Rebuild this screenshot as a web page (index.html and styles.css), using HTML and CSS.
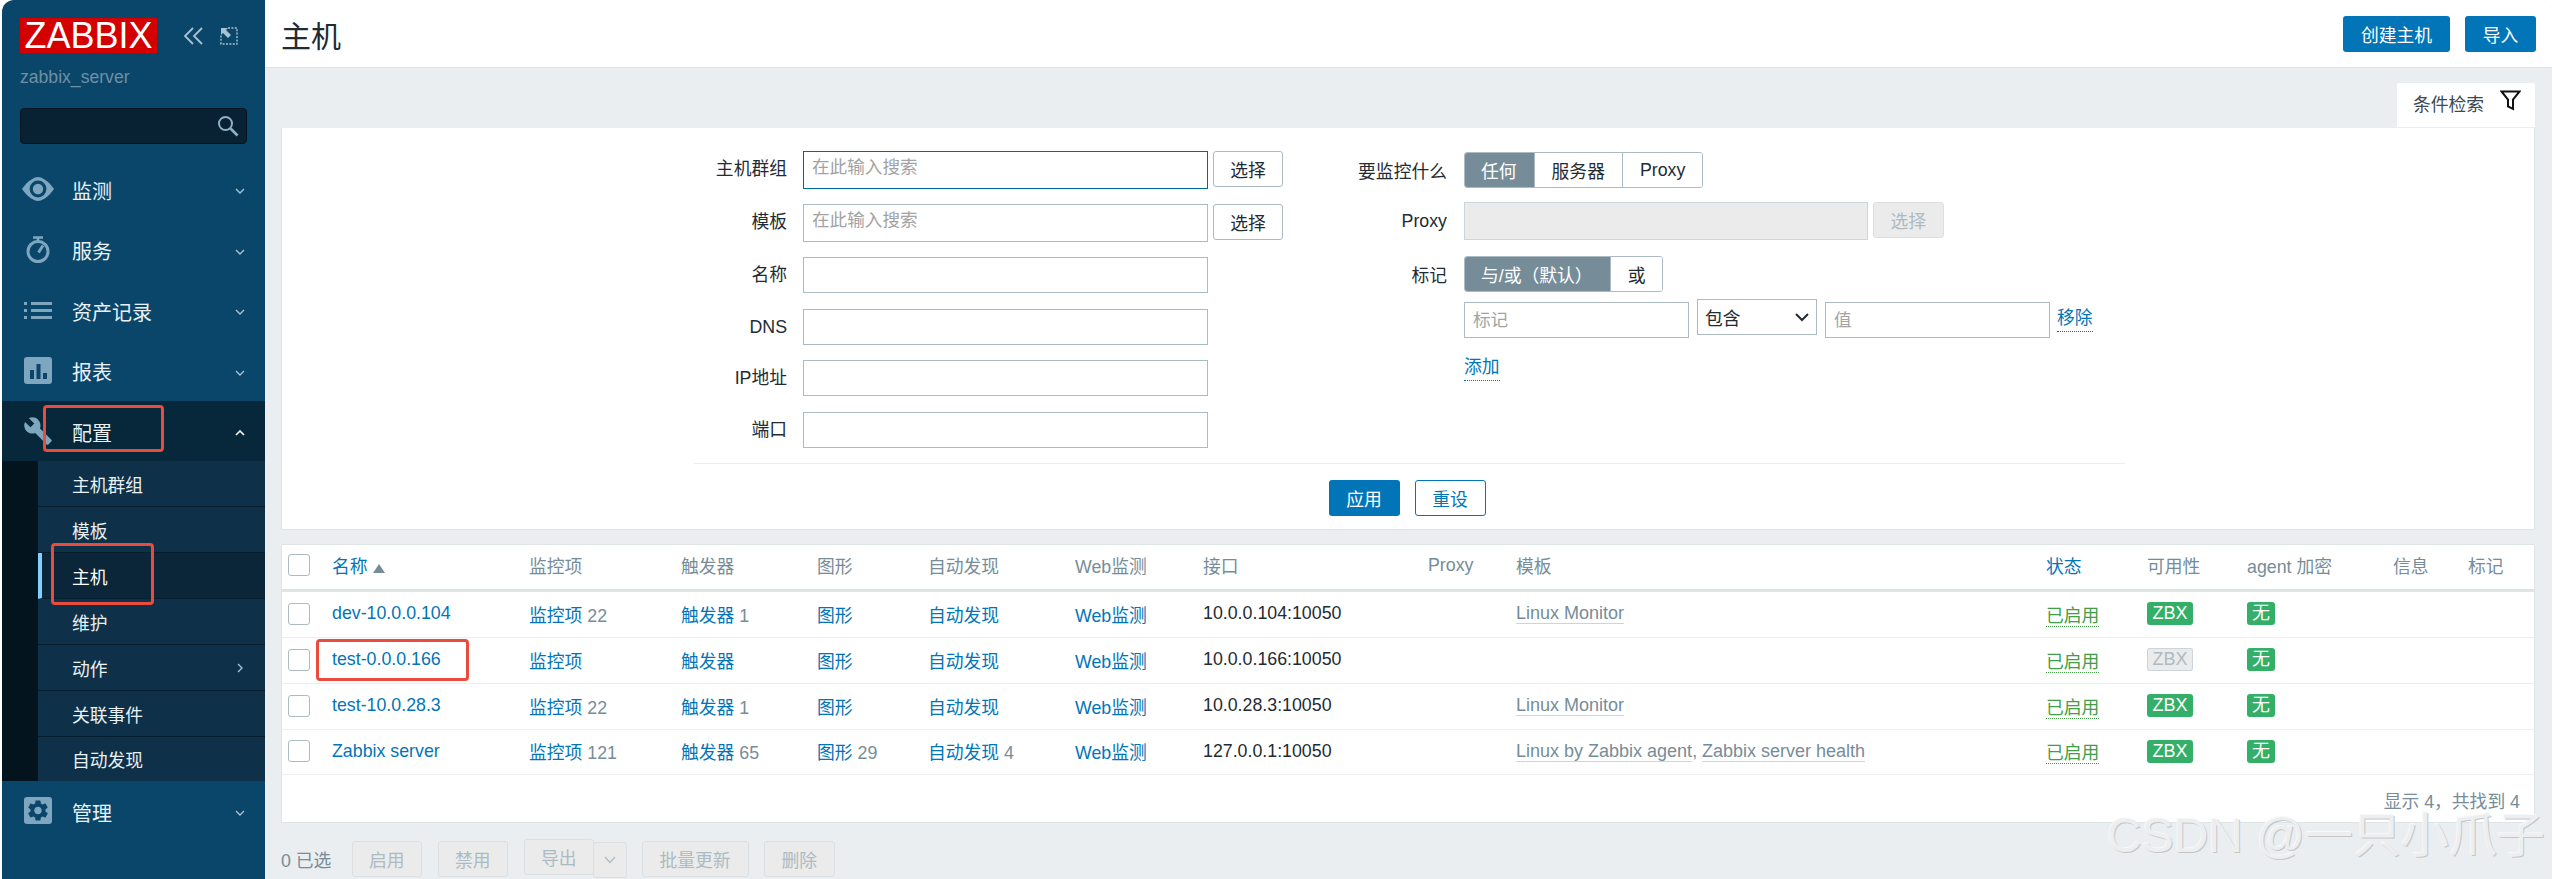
FILE: index.html
```html
<!DOCTYPE html>
<html>
<head>
<title>主机</title>
<meta charset="utf-8">
<link rel="stylesheet" href="styles.css">
</head>
<body>
  <div class="app">
    <aside class="sidebar">
      <div class="brand">
        <div class="logo">ZABBIX</div>
        <svg class="collapse" width="20" height="18" viewBox="0 0 20 18"><path d="M10 1 2 9l8 8M19 1l-8 8 8 8" fill="none" stroke="#a9c2d2" stroke-width="1.8"/></svg>
        <svg class="kiosk" width="18" height="18" viewBox="0 0 18 18"><path d="M8 1h9v16H1V8" fill="none" stroke="#a9c2d2" stroke-width="1.4" stroke-dasharray="2 1.4"/><path d="M1 1h7L6 3l5 5-3 3-5-5-2 2z" fill="#a9c2d2"/></svg>
      </div>
      <div class="server-name">zabbix_server</div>
      <div class="search-box">
        <svg width="22" height="22" viewBox="0 0 22 22"><circle cx="8.5" cy="8.5" r="6.5" fill="none" stroke="#8fb0c4" stroke-width="2"/><path d="m13.5 13.5 7 7" stroke="#8fb0c4" stroke-width="2.6"/></svg>
      </div>
      <nav class="menu">
        <a class="menu-item">
          <svg class="menu-icon" width="32" height="24" viewBox="0 0 32 24"><path d="M0 12C6 3 13 0 16 0s10 3 16 12c-6 9-13 12-16 12S6 21 0 12z" fill="#7ea6bf"/><circle cx="16" cy="12" r="8.4" fill="#0a466a"/><circle cx="16" cy="12" r="5.2" fill="#7ea6bf"/></svg>
          <span>监测</span>
          <svg class="chevron" width="10" height="6" viewBox="0 0 10 6"><path d="m1 1 4 4 4-4" fill="none" stroke="#a9c2d2" stroke-width="1.4"/></svg>
        </a>
        <a class="menu-item">
          <svg class="menu-icon" width="32" height="27" viewBox="0 0 32 27"><circle cx="16" cy="15.500" r="10" fill="none" stroke="#7ea6bf" stroke-width="3"/><path d="M11 1.500h10M16 2v3" stroke="#7ea6bf" stroke-width="2.600"/><path d="m21 9.500-4.500 7" stroke="#7ea6bf" stroke-width="3"/></svg>
          <span>服务</span>
          <svg class="chevron" width="10" height="6" viewBox="0 0 10 6"><path d="m1 1 4 4 4-4" fill="none" stroke="#a9c2d2" stroke-width="1.4"/></svg>
        </a>
        <a class="menu-item">
          <svg class="menu-icon" width="32" height="17" viewBox="0 0 32 17"><path d="M2 0h3v3H2zM2 7h3v3H2zM2 14h3v3H2zM9 0h21v3H9zM9 7h21v3H9zM9 14h21v3H9z" fill="#7ea6bf"/></svg>
          <span>资产记录</span>
          <svg class="chevron" width="10" height="6" viewBox="0 0 10 6"><path d="m1 1 4 4 4-4" fill="none" stroke="#a9c2d2" stroke-width="1.4"/></svg>
        </a>
        <a class="menu-item">
          <svg class="menu-icon" width="32" height="28" viewBox="0 0 32 28"><rect x="2" width="28" height="27" rx="3" fill="#7ea6bf"/><path d="M8 13h4v9H8zM14.500 7h4v15h-4zM21 16h4v6h-4z" fill="#0a466a"/></svg>
          <span>报表</span>
          <svg class="chevron" width="10" height="6" viewBox="0 0 10 6"><path d="m1 1 4 4 4-4" fill="none" stroke="#a9c2d2" stroke-width="1.4"/></svg>
        </a>
        <a class="menu-item menu-item-open">
          <svg class="menu-icon" width="32" height="30" viewBox="0 0 24 24"><path d="M22.700 19l-9.100-9.100c.9-2.300.4-5-1.500-6.900-2-2-5-2.400-7.400-1.300L9 6 6 9 1.600 4.700C.4 7.100.9 10.100 2.900 12.100c1.900 1.900 4.600 2.400 6.900 1.500l9.100 9.100c.4.400 1 .4 1.400 0l2.300-2.300c.5-.4.5-1.100.1-1.400z" fill="#7ea6bf"/></svg>
          <span>配置</span>
          <svg class="chevron" width="10" height="6" viewBox="0 0 10 6"><path d="m1 5 4-4 4 4" fill="none" stroke="#fff" stroke-width="1.6"/></svg>
        </a>
        <div class="submenu">
          <ul class="submenu-list">
            <li>主机群组</li>
            <li>模板</li>
            <li class="current">主机</li>
            <li>维护</li>
            <li class="has-arrow">动作
              <svg width="6" height="10" viewBox="0 0 6 10"><path d="m1 1 4 4-4 4" fill="none" stroke="#a9c2d2" stroke-width="1.4"/></svg>
            </li>
            <li>关联事件</li>
            <li>自动发现</li>
          </ul>
        </div>
        <a class="menu-item">
          <svg class="menu-icon" width="32" height="28" viewBox="0 0 32 28"><rect x="2" width="28" height="27" rx="3" fill="#7ea6bf"/><g transform="translate(3.500 1) scale(1.040)"><path d="M19.140 12.940c.04-.3.06-.61.06-.94 0-.32-.02-.64-.07-.94l2.030-1.580a.49.49 0 0 0 .12-.61l-1.920-3.320a.488.488 0 0 0-.59-.22l-2.390.96c-.5-.38-1.030-.7-1.620-.94l-.36-2.540a.484.484 0 0 0-.48-.41h-3.840c-.24 0-.43.17-.47.41l-.36 2.540c-.59.24-1.130.57-1.620.94l-2.390-.96c-.22-.08-.47 0-.59.22L2.740 8.870c-.12.21-.08.47.12.61l2.030 1.580c-.05.3-.09.63-.09.94s.02.64.07.94l-2.030 1.580a.49.49 0 0 0-.12.61l1.920 3.320c.12.22.37.29.59.22l2.390-.96c.5.38 1.030.7 1.620.94l.36 2.540c.05.24.24.41.48.41h3.840c.24 0 .44-.17.47-.41l.36-2.540c.59-.24 1.130-.56 1.620-.94l2.390.96c.22.08.47 0 .59-.22l1.920-3.320c.12-.22.07-.47-.12-.61l-2.010-1.580zM12 15.600c-1.980 0-3.600-1.620-3.600-3.600s1.620-3.600 3.600-3.600 3.600 1.620 3.600 3.600-1.620 3.600-3.600 3.600z" fill="#0a466a"/></g></svg>
          <span>管理</span>
          <svg class="chevron" width="10" height="6" viewBox="0 0 10 6"><path d="m1 1 4 4 4-4" fill="none" stroke="#a9c2d2" stroke-width="1.4"/></svg>
        </a>
      </nav>
    </aside>

    <main class="main">
      <header class="page-header">
        <h1>主机</h1>
        <div class="header-actions">
          <button class="btn-primary btn-create">创建主机</button>
          <button class="btn-primary btn-import">导入</button>
        </div>
      </header>

      <div class="content">
        <div class="filter-tabs">
          <div class="filter-tab">
            <span>条件检索</span>
            <svg width="21" height="21" viewBox="0 0 21 21"><path d="M1.500 1.500h18l-6.500 8v9.500l-5-2.500v-7z" fill="none" stroke="#111" stroke-width="2"/></svg>
          </div>
        </div>

        <section class="filter-panel">
          <div class="filter-form">
            <div class="filter-left">
              <label>主机群组</label>
              <input class="input input-focus" type="text" placeholder="在此输入搜索">
              <button class="btn-alt">选择</button>
              <label>模板</label>
              <input class="input input-tall" type="text" placeholder="在此输入搜索">
              <button class="btn-alt">选择</button>
              <label>名称</label>
              <input class="input" type="text">
              <span></span>
              <label>DNS</label>
              <input class="input" type="text">
              <span></span>
              <label>IP地址</label>
              <input class="input" type="text">
              <span></span>
              <label>端口</label>
              <input class="input" type="text">
              <span></span>
            </div>
            <div class="filter-right">
              <div class="right-row row-monitored">
                <label>要监控什么</label>
                <div class="segmented">
                  <span class="seg seg-on">任何</span>
                  <span class="seg">服务器</span>
                  <span class="seg">Proxy</span>
                </div>
              </div>
              <div class="right-row row-proxy">
                <label>Proxy</label>
                <input class="input input-disabled" type="text" disabled>
                <button class="btn-off btn-off-select">选择</button>
              </div>
              <div class="right-row row-tags">
                <label>标记</label>
                <div class="segmented">
                  <span class="seg seg-on seg-andor">与/或（默认）</span>
                  <span class="seg">或</span>
                </div>
              </div>
              <div class="tag-row">
                <input class="input tag-input" type="text" placeholder="标记">
                <div class="select">
                  <span>包含</span>
                  <svg width="14" height="9" viewBox="0 0 14 9"><path d="m1 1 6 6 6-6" fill="none" stroke="#1f2c33" stroke-width="2"/></svg>
                </div>
                <input class="input tag-input" type="text" placeholder="值">
                <a class="link-dotted">移除</a>
              </div>
              <div class="add-row"><a class="link-dotted">添加</a></div>
            </div>
          </div>
          <div class="filter-buttons">
            <button class="btn-primary">应用</button>
            <button class="btn-reset">重设</button>
          </div>
        </section>

        <section class="hosts">
          <table class="hosts-table">
            <colgroup>
              <col class="c-check"><col class="c-name"><col class="c-items"><col class="c-triggers">
              <col class="c-graphs"><col class="c-discovery"><col class="c-web"><col class="c-iface">
              <col class="c-proxy"><col class="c-templates"><col class="c-status"><col class="c-avail">
              <col class="c-enc"><col class="c-info"><col class="c-tags">
            </colgroup>
            <thead>
              <tr>
                <th class="check"><input type="checkbox"></th>
                <th><a class="sort">名称</a> <i class="sort-arrow"></i></th>
                <th>监控项</th>
                <th>触发器</th>
                <th>图形</th>
                <th>自动发现</th>
                <th>Web监测</th>
                <th>接口</th>
                <th>Proxy</th>
                <th>模板</th>
                <th><a class="sort">状态</a></th>
                <th>可用性</th>
                <th>agent 加密</th>
                <th>信息</th>
                <th>标记</th>
              </tr>
            </thead>
            <tbody>
              <tr>
                <td class="check"><input type="checkbox"></td>
                <td><a>dev-10.0.0.104</a></td>
                <td><a>监控项</a> <em>22</em></td>
                <td><a>触发器</a> <em>1</em></td>
                <td><a>图形</a></td>
                <td><a>自动发现</a></td>
                <td><a>Web监测</a></td>
                <td>10.0.0.104:10050</td>
                <td></td>
                <td><a class="tpl">Linux Monitor</a></td>
                <td><a class="on">已启用</a></td>
                <td><span class="badge">ZBX</span></td>
                <td><span class="badge badge-none">无</span></td>
                <td></td>
                <td></td>
              </tr>
              <tr>
                <td class="check"><input type="checkbox"></td>
                <td><a>test-0.0.0.166</a></td>
                <td><a>监控项</a></td>
                <td><a>触发器</a></td>
                <td><a>图形</a></td>
                <td><a>自动发现</a></td>
                <td><a>Web监测</a></td>
                <td>10.0.0.166:10050</td>
                <td></td>
                <td></td>
                <td><a class="on">已启用</a></td>
                <td><span class="badge badge-off">ZBX</span></td>
                <td><span class="badge badge-none">无</span></td>
                <td></td>
                <td></td>
              </tr>
              <tr>
                <td class="check"><input type="checkbox"></td>
                <td><a>test-10.0.28.3</a></td>
                <td><a>监控项</a> <em>22</em></td>
                <td><a>触发器</a> <em>1</em></td>
                <td><a>图形</a></td>
                <td><a>自动发现</a></td>
                <td><a>Web监测</a></td>
                <td>10.0.28.3:10050</td>
                <td></td>
                <td><a class="tpl">Linux Monitor</a></td>
                <td><a class="on">已启用</a></td>
                <td><span class="badge">ZBX</span></td>
                <td><span class="badge badge-none">无</span></td>
                <td></td>
                <td></td>
              </tr>
              <tr class="last">
                <td class="check"><input type="checkbox"></td>
                <td><a>Zabbix server</a></td>
                <td><a>监控项</a> <em>121</em></td>
                <td><a>触发器</a> <em>65</em></td>
                <td><a>图形</a> <em>29</em></td>
                <td><a>自动发现</a> <em>4</em></td>
                <td><a>Web监测</a></td>
                <td>127.0.0.1:10050</td>
                <td></td>
                <td><a class="tpl">Linux by Zabbix agent</a><em>,</em> <a class="tpl">Zabbix server health</a></td>
                <td><a class="on">已启用</a></td>
                <td><span class="badge">ZBX</span></td>
                <td><span class="badge badge-none">无</span></td>
                <td></td>
                <td></td>
              </tr>
            </tbody>
          </table>
          <div class="table-stats">显示 4，共找到 4</div>
        </section>

        <div class="action-bar">
          <span class="selected-count">0 已选</span>
          <button class="btn-off">启用</button>
          <button class="btn-off">禁用</button>
          <div class="export-group">
            <button class="btn-off">导出</button>
            <button class="btn-off btn-off-arrow">
              <svg width="12" height="8" viewBox="0 0 12 8"><path d="m1 1 5 5.500L11 1" fill="none" stroke="#acbbc2" stroke-width="1.200"/></svg>
            </button>
          </div>
          <button class="btn-off btn-off-wide">批量更新</button>
          <button class="btn-off">删除</button>
        </div>
      </div>
    </main>
  </div>

  <!-- red boxes drawn over the screenshot -->
  <div class="mark mark-config"></div>
  <div class="mark mark-host"></div>
  <div class="mark mark-row"></div>
  <div class="watermark">CSDN @一只小爪子</div>
</body>
</html>
```

FILE: styles.css
```css
* {
  box-sizing: border-box;
}
html, body {
  height: 100%;
}
body {
  margin: 0;
  position: relative;
  overflow: hidden;
  background-color: #fff;
  color: #1f2c33;
  font-family: "Liberation Sans", "Noto Sans CJK SC", sans-serif;
  font-size: 17.8px;
}
a {
  color: #0275b8;
}
button {
  font-family: inherit;
  font-size: 17.8px;
  height: 36px;
  border-radius: 3px;
  padding: 0 17px;
}

.app {
  display: flex;
  height: 879px;
  margin: 0 1px 0 2px;
}

/* sidebar */
.sidebar {
  width: 263px;
  flex-shrink: 0;
  background-color: #0a466a;
  border-top-left-radius: 12px;
  overflow: hidden;
}
.brand {
  display: flex;
  align-items: center;
  padding: 18px 0 0 18px;
}
.logo {
  width: 137px;
  height: 35px;
  background-color: #d40000;
  color: #fff;
  font-size: 36px;
  line-height: 36px;
  text-align: center;
}
.collapse {
  margin-left: 26px;
}
.kiosk {
  margin-left: 17px;
}
.server-name {
  margin: 13px 0 0 18px;
  height: 22px;
  line-height: 22px;
  color: #6e8fa4;
  font-size: 17.6px;
}
.search-box {
  display: flex;
  align-items: center;
  justify-content: flex-end;
  width: 227px;
  height: 36px;
  margin: 20px 0 0 18px;
  padding-right: 7px;
  background-color: #082233;
  border: 1px solid #04141e;
  border-radius: 4px;
}
.menu {
  margin-top: 15px;
}
.menu-item {
  display: flex;
  align-items: center;
  height: 60.5px;
  padding: 0 20px 0 20px;
  color: #e8f1f6;
  font-size: 20px;
}
.menu-icon {
  flex-shrink: 0;
  margin-right: 19px;
}
.menu-item span {
  flex: 1;
  position: relative;
  top: 1px;
  left: -1px;
}
.chevron {
  position: relative;
  top: 2px;
}
.menu-item-open {
  height: 60px;
  background-color: #07273a;
}
.submenu {
  height: 320px;
  padding-left: 36px;
  background-color: #04141e;
}
.submenu-list {
  height: 100%;
  margin: 0;
  padding: 0;
  list-style: none;
  background-color: #0e3048;
}
.submenu-list li {
  display: flex;
  align-items: center;
  justify-content: space-between;
  height: 46px;
  padding: 0 22px 0 34px;
  color: #e8f1f6;
  border-bottom: 1px solid #051d2c;
}
.submenu-list li:last-child {
  border-bottom: none;
  height: 44px;
}
.submenu-list li.current {
  background-color: #0a2638;
  border-left: 4px solid #7fcfff;
  padding-left: 30px;
  color: #fff;
}

/* main */
.main {
  flex: 1;
  background-color: #ebeef0;
  border-top-right-radius: 12px;
  overflow: hidden;
}
.page-header {
  display: flex;
  align-items: center;
  justify-content: space-between;
  height: 68px;
  padding: 0 16px;
  background-color: #fff;
  border-bottom: 1px solid #dfe4e7;
}
.page-header h1 {
  margin: 0;
  font-size: 30px;
  font-weight: normal;
}
.header-actions {
  display: flex;
  gap: 15px;
}
.btn-create {
  width: 107px;
  padding: 0;
}
.btn-import {
  width: 71px;
  padding: 0;
}
.btn-primary {
  background-color: #0275b8;
  border: none;
  color: #fff;
}
.content {
  padding: 0 17px 0 16px;
}

/* filter */
.filter-tabs {
  display: flex;
  justify-content: flex-end;
  height: 59px;
  padding-top: 15px;
}
.filter-tab {
  display: flex;
  align-items: flex-start;
  justify-content: space-between;
  width: 138px;
  height: 44px;
  padding: 7px 14px 0 16px;
  background-color: #fff;
  border-radius: 2px 2px 0 0;
  color: #3b4a52;
}
.filter-panel {
  height: 403px;
  background-color: #fff;
  border: 1px solid #dfe4e7;
  border-top-color: #ebeef0;
}
.filter-form {
  display: flex;
  width: 1431px;
  height: 336px;
  margin-left: 412px;
  padding-top: 23px;
  border-bottom: 1px solid #ebeef0;
}
.filter-left {
  display: grid;
  grid-template-columns: 93px 405px 70px;
  grid-template-rows: 53px 53px 52px 51px 52px 36px;
  column-gap: 16px;
  width: 646px;
}
.filter-left label {
  line-height: 36px;
  text-align: right;
  white-space: nowrap;
}
.filter-left > .btn-alt {
  margin-left: -11px;
  width: 70px;
  padding: 0;
}
.input {
  height: 36px;
  padding: 0 8px;
  background-color: #fff;
  border: 1px solid #acbbc2;
  border-radius: 0;
  outline: none;
  font-family: inherit;
  font-size: 17.6px;
  color: #1f2c33;
}
.input::placeholder {
  color: #a3a3a3;
}
.input-focus,
.input-tall {
  height: 38px;
  padding-bottom: 5px;
}
.input-focus {
  border-color: #00699f;
}
.btn-alt {
  background-color: #fff;
  border: 1px solid #acbbc2;
  color: #1f2c33;
}
.btn-off {
  background-color: #ebebeb;
  border: 1px solid #dcdfe1;
  color: #acbbc2;
  width: 70.5px;
  padding: 0;
}
.btn-off-wide {
  width: 107px;
}
.filter-right {
  padding-top: 1px;
}
.filter-right label {
  width: 107px;
  margin-right: 17px;
  text-align: right;
  white-space: nowrap;
}
.right-row {
  display: flex;
  align-items: center;
}
.row-monitored {
  height: 36px;
}
.row-proxy {
  margin-top: 14px;
}
.row-tags {
  margin-top: 16px;
}
.input-disabled {
  width: 404px;
  height: 38px;
  background-color: #ebebeb;
  border-color: #ccd5d9;
}
.btn-off-select {
  margin: -2px 0 0 5px;
}
.segmented {
  display: flex;
  height: 36px;
  border: 1px solid #acbbc2;
  border-radius: 3px;
  overflow: hidden;
}
.seg {
  display: flex;
  align-items: center;
  padding: 0 17px;
  border-left: 1px solid #acbbc2;
  background-color: #fff;
  white-space: nowrap;
}
.seg:first-child {
  border-left: none;
}
.seg-on {
  margin: -1px 0 -1px -1px;
  background-color: #768d99;
  color: #fff;
}
.seg-andor {
  padding: 0 17px;
}
.tag-row {
  display: flex;
  align-items: flex-start;
  margin: 10px 0 0 124px;
}
.tag-input {
  width: 225px;
  height: 36px;
  margin-top: 0;
}
.select {
  display: flex;
  align-items: center;
  justify-content: space-between;
  width: 120px;
  height: 36px;
  margin: -3px 8px 0 8px;
  padding: 0 7px;
  border: 1px solid #acbbc2;
}
.link-dotted {
  margin: 4px 0 0 7px;
  padding-bottom: 1px;
  line-height: 24px;
  border-bottom: 1px dotted #0275b8;
  color: #0275b8;
}
.add-row {
  display: flex;
  margin: 13px 0 0 117px;
}
.filter-buttons {
  display: flex;
  justify-content: center;
  gap: 15px;
  padding: 16px 2px 0 0;
}
.filter-buttons button {
  width: 71px;
  padding: 0;
}
.btn-reset {
  background-color: #fff;
  border: 1px solid #0275b8;
  color: #0275b8;
}

/* hosts table */
.hosts {
  height: 279px;
  margin-top: 14px;
  background-color: #fff;
  border: 1px solid #dfe4e7;
}
.hosts-table {
  width: 2252px;
  table-layout: fixed;
  border-collapse: separate;
  border-spacing: 0;
}
.c-check { width: 50px; }
.c-name { width: 197px; }
.c-items { width: 152px; }
.c-triggers { width: 136px; }
.c-graphs { width: 111px; }
.c-discovery { width: 147px; }
.c-web { width: 128px; }
.c-iface { width: 225px; }
.c-proxy { width: 88px; }
.c-templates { width: 530px; }
.c-status { width: 101px; }
.c-avail { width: 100px; }
.c-enc { width: 146px; }
.c-info { width: 75px; }
.c-tags { width: 66px; }
.hosts-table th {
  height: 47px;
  padding: 0 0 4px;
  border-bottom: 3px solid #dfe4e7;
  color: #768d99;
  font-weight: normal;
  text-align: left;
  white-space: nowrap;
}
.hosts-table td {
  height: 46px;
  padding: 0 0 2px;
  border-bottom: 1px solid #ebeef0;
  white-space: nowrap;
}
.hosts-table .last td {
  height: 45px;
}
.hosts-table .check {
  padding-left: 6px;
}
.hosts-table input[type="checkbox"] {
  display: block;
  appearance: none;
  width: 22px;
  height: 22px;
  margin: 0;
  background-color: #fff;
  border: 1px solid #acbbc2;
  border-radius: 3px;
}
.hosts-table em {
  font-style: normal;
  color: #768d99;
}
.sort-arrow {
  display: inline-block;
  width: 0;
  height: 0;
  border-left: 6px solid transparent;
  border-right: 6px solid transparent;
  border-bottom: 9px solid #768d99;
}
.hosts-table a.tpl {
  color: #768d99;
  font-size: 18px;
  border-bottom: 1px solid #ccd5d9;
}
.hosts-table a.on {
  color: #429e47;
  border-bottom: 1px dotted #429e47;
}
.badge {
  display: inline-block;
  height: 23px;
  width: 46px;
  line-height: 23px;
  text-align: center;
  background-color: #34af67;
  color: #fff;
  border-radius: 3px;
  font-size: 18px;
  vertical-align: middle;
}
.badge-none {
  width: 28px;
}
.badge-off {
  background-color: #ebebeb;
  box-shadow: inset 0 0 0 1px #ccd5d9;
  color: #acbbc2;
}
.table-stats {
  margin-top: 12px;
  padding-right: 14px;
  text-align: right;
  color: #768d99;
}

/* bottom bar */
.action-bar {
  display: flex;
  align-items: center;
  margin-top: 16px;
  gap: 15.500px;
}
.selected-count {
  width: 55px;
  color: #768d99;
}
.export-group {
  display: flex;
  align-items: flex-start;
  margin-right: -1px;
}
.btn-off-arrow {
  width: 34px;
  margin-top: 3px;
  margin-left: -1px;
  display: flex;
  align-items: center;
  justify-content: center;
}

/* annotations */
.mark {
  position: absolute;
  border: 3px solid #e94b3c;
  border-radius: 4px;
}
.mark-config {
  left: 43px;
  top: 405px;
  width: 121px;
  height: 47px;
}
.mark-host {
  left: 51px;
  top: 543px;
  width: 103px;
  height: 62px;
}
.mark-row {
  left: 316px;
  top: 639px;
  width: 153px;
  height: 42px;
}
.watermark {
  position: absolute;
  left: 2107px;
  top: 808px;
  font-size: 48px;
  line-height: 56px;
  white-space: nowrap;
  color: #eceef0;
  text-shadow: 1px 1px 0 #c4c6c8, -1px -1px 0 #f8f8f8;
}
```
